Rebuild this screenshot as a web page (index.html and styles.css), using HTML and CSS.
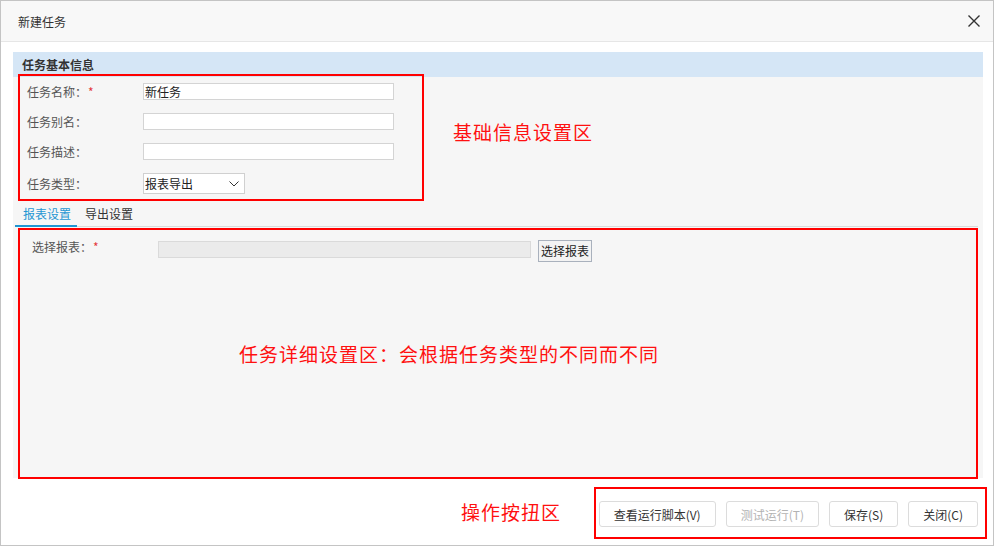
FILE: index.html
```html
<!DOCTYPE html>
<html lang="zh-CN">
<head>
<meta charset="utf-8">
<title>新建任务</title>
<link rel="stylesheet" href="styles.css">
</head>
<body>
<div class="dialog">
  <div class="dlg-header">
    <span class="dlg-title">新建任务</span>
    <span class="dlg-close">
      <svg width="12" height="12" viewBox="0 0 12 12"><path d="M0.5 0.5 L11.5 11.5 M11.5 0.5 L0.5 11.5" stroke="#333" stroke-width="1.4" fill="none"/></svg>
    </span>
  </div>
  <div class="dlg-body">
    <div class="panel">
      <div class="section-head">任务基本信息</div>
      <div class="form-basic">
        <div class="form-row">
          <span class="form-label">任务名称：<span class="req">*</span></span>
          <div class="text-input">新任务</div>
        </div>
        <div class="form-row">
          <span class="form-label">任务别名：</span>
          <div class="text-input"></div>
        </div>
        <div class="form-row">
          <span class="form-label">任务描述：</span>
          <div class="text-input"></div>
        </div>
        <div class="form-row select-row">
          <span class="form-label">任务类型：</span>
          <div class="select">
            <span>报表导出</span>
            <svg width="10" height="6" viewBox="0 0 10 6"><path d="M0.5 0.5 L5 5 L9.5 0.5" stroke="#333" stroke-width="1" fill="none"/></svg>
          </div>
        </div>
      </div>
      <div class="tabs">
        <div class="tab active">报表设置</div>
        <div class="tab">导出设置</div>
      </div>
      <div class="tab-content">
        <div class="detail-row">
          <span class="detail-label">选择报表：<span class="req">*</span></span>
          <div class="report-input"></div>
          <button class="pick-btn">选择报表</button>
        </div>
      </div>
    </div>
    <div class="footer">
      <button class="btn">查看运行脚本(V)</button>
      <button class="btn disabled">测试运行(T)</button>
      <button class="btn">保存(S)</button>
      <button class="btn">关闭(C)</button>
    </div>
  </div>

  <div class="anno-box anno-box-basic"></div>
  <div class="anno-box anno-box-detail"></div>
  <div class="anno-box anno-box-actions"></div>
  <div class="anno-text anno-text-basic">基础信息设置区</div>
  <div class="anno-text anno-text-detail">任务详细设置区：会根据任务类型的不同而不同</div>
  <div class="anno-text anno-text-actions">操作按扭区</div>
</div>
</body>
</html>
```

FILE: styles.css
```css
html, body {
  margin: 0;
  padding: 0;
  background: #fff;
}

body {
  font-family: "Noto Sans CJK SC", "Microsoft YaHei", sans-serif;
  font-size: 12px;
  color: #333;
}

.dialog {
  position: relative;
  width: 994px;
  height: 546px;
  box-sizing: border-box;
  border: 1px solid #c4c4c4;
  display: flex;
  flex-direction: column;
  background: #fff;
}

.dlg-header {
  height: 40px;
  flex-shrink: 0;
  border-bottom: 1px solid #e6e6e6;
  background: #f8f8f8;
  display: flex;
  align-items: center;
  justify-content: space-between;
  padding: 0 13px 0 17px;
}

.dlg-title {
  font-size: 12px;
  color: #333;
}

.dlg-close {
  display: flex;
  width: 12px;
  height: 12px;
}

.dlg-body {
  flex: 1;
  display: flex;
  flex-direction: column;
  padding: 10px 10px 0 12px;
}

.panel {
  height: 426px;
  flex-shrink: 0;
  background: #f6f6f6;
  display: flex;
  flex-direction: column;
}

.section-head {
  height: 25px;
  line-height: 25px;
  background: #d5e6f6;
  padding-left: 9px;
  font-weight: bold;
  font-size: 12px;
  color: #333;
}

.form-basic {
  padding: 6px 0 7px 14px;
  display: flex;
  flex-direction: column;
  gap: 13px;
}

.form-row {
  display: flex;
  align-items: center;
  height: 17px;
}

.form-row.select-row {
  height: 21px;
}

.form-label {
  width: 116px;
  color: #555;
  line-height: 14px;
}

.req {
  color: #e4393c;
  margin-left: 1px;
}

.text-input {
  width: 251px;
  height: 17px;
  box-sizing: border-box;
  border: 1px solid #d4d4d4;
  background: #fff;
  padding: 0 1px;
  line-height: 15px;
  color: #222;
}

.select {
  width: 102px;
  height: 21px;
  box-sizing: border-box;
  border: 1px solid #d0d0d0;
  background: #fff;
  display: flex;
  align-items: center;
  justify-content: space-between;
  padding: 0 5px 0 1px;
  color: #222;
}

.tabs {
  display: flex;
  height: 26px;
  box-sizing: border-box;
  border-bottom: 1px solid #dadada;
  margin: 0 5px 0 2px;
}

.tab {
  padding: 0 6px 0 8px;
  line-height: 25px;
  color: #333;
}

.tab.active {
  color: #1f96d3;
  border-bottom: 2px solid #1f96d3;
  margin-bottom: -1px;
  box-sizing: border-box;
}

.tab-content {
  flex: 1;
  padding: 13px 0 0 19px;
}

.detail-row {
  display: flex;
  align-items: flex-start;
  height: 22px;
}

.detail-label {
  width: 126px;
  color: #555;
  line-height: 14px;
}

.report-input {
  width: 373px;
  height: 17px;
  margin-top: 1px;
  box-sizing: border-box;
  border: 1px solid #dadada;
  background: #ebebeb;
}

.pick-btn {
  margin: 0 0 0 7px;
  height: 22px;
  box-sizing: border-box;
  border: 1px solid #a9b1bd;
  background: #f3f3f3;
  padding: 0 2px;
  font-family: inherit;
  font-size: 12px;
  color: #222;
  line-height: 20px;
}

.footer {
  flex: 1;
  display: flex;
  justify-content: flex-end;
  align-items: flex-start;
  gap: 10px;
  padding: 23px 5px 0 0;
}

.btn {
  height: 26px;
  box-sizing: border-box;
  border: 1px solid #dcdcdc;
  border-radius: 3px;
  background: #fff;
  font-family: inherit;
  font-size: 12px;
  color: #333;
  padding: 0 14px;
  margin: 0;
}

.btn.disabled {
  color: #b3b3b3;
}

.anno-box {
  position: absolute;
  box-sizing: border-box;
  border: 2px solid #ff0000;
  pointer-events: none;
}

.anno-box-basic {
  left: 17px;
  top: 73px;
  width: 406px;
  height: 127px;
}

.anno-box-detail {
  left: 17px;
  top: 227px;
  width: 960px;
  height: 251px;
}

.anno-box-actions {
  left: 593px;
  top: 486px;
  width: 393px;
  height: 52px;
}

.anno-text {
  position: absolute;
  color: #ff1010;
  font-size: 19px;
  line-height: 19px;
  letter-spacing: 1px;
  white-space: nowrap;
}

.anno-text-basic {
  left: 452px;
  top: 121px;
}

.anno-text-detail {
  left: 238px;
  top: 343px;
}

.anno-text-actions {
  left: 460px;
  top: 501px;
}
```
